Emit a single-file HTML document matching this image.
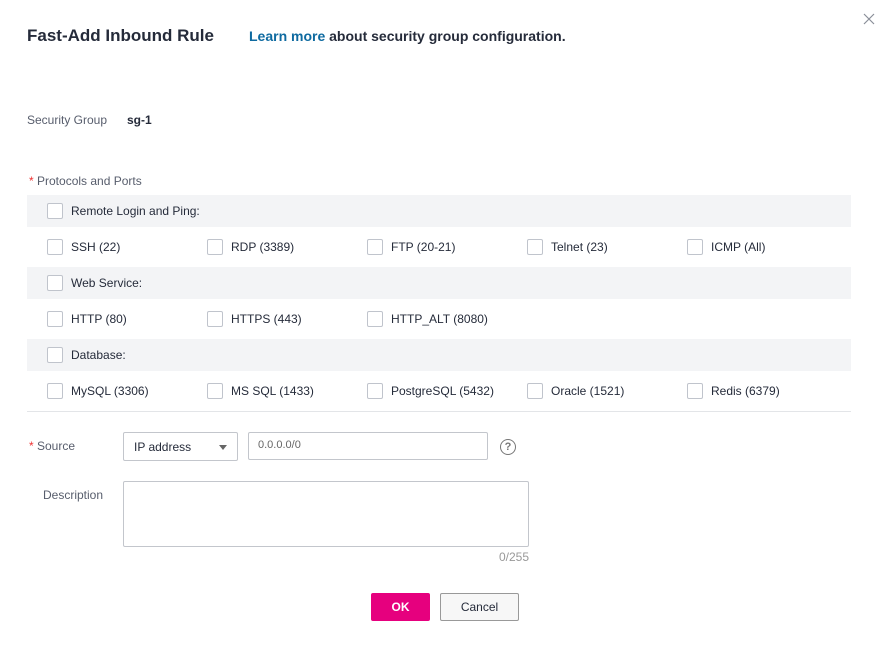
<!DOCTYPE html><html><head><meta charset="utf-8"><style>
body{margin:0;width:892px;height:650px;background:#fff;font-family:"Liberation Sans",sans-serif;font-size:12px;color:#252b3a;position:relative;overflow:hidden}
.a{position:absolute;white-space:nowrap}
.l{color:#575d6c}
.g{position:absolute;left:27px;width:824px;height:32px;background:#f3f4f6}
.cb{position:absolute;width:14px;height:14px;border:1px solid #c0c4cc;border-radius:2px;background:#fff}
.box{position:absolute;border:1px solid #c3c6cc;border-radius:2px;background:#fff;box-sizing:border-box}
</style></head><body>
<div class="a" style="left:27px;top:26px;font-size:17px;font-weight:bold;color:#252b3a">Fast-Add Inbound Rule</div>
<div class="a" style="left:249px;top:28px;font-size:14px;font-weight:bold"><span style="color:#0e6aa0">Learn more</span> about security group configuration.</div>
<svg class="a" style="left:863px;top:13px" width="12" height="12" viewBox="0 0 12 12"><path d="M1 1L11 11M11 1L1 11" stroke="#8a8e99" stroke-width="1.2" fill="none"/></svg>
<div class="a l" style="left:27px;top:113px">Security Group</div>
<div class="a" style="left:127px;top:113px;font-weight:bold">sg-1</div>
<div class="a l" style="left:29px;top:174px"><span style="color:#e33">*</span> Protocols and Ports</div>
<div class="g" style="top:195px"></div><div class="g" style="top:267px"></div><div class="g" style="top:339px"></div>
<div class="cb" style="left:47px;top:203px"></div><div class="a" style="left:71px;top:204px">Remote Login and Ping:</div>
<div class="cb" style="left:47px;top:275px"></div><div class="a" style="left:71px;top:276px">Web Service:</div>
<div class="cb" style="left:47px;top:347px"></div><div class="a" style="left:71px;top:348px">Database:</div>
<div class="cb" style="left:47px;top:239px"></div><div class="a" style="left:71px;top:240px">SSH (22)</div>
<div class="cb" style="left:207px;top:239px"></div><div class="a" style="left:231px;top:240px">RDP (3389)</div>
<div class="cb" style="left:367px;top:239px"></div><div class="a" style="left:391px;top:240px">FTP (20-21)</div>
<div class="cb" style="left:527px;top:239px"></div><div class="a" style="left:551px;top:240px">Telnet (23)</div>
<div class="cb" style="left:687px;top:239px"></div><div class="a" style="left:711px;top:240px">ICMP (All)</div>
<div class="cb" style="left:47px;top:311px"></div><div class="a" style="left:71px;top:312px">HTTP (80)</div>
<div class="cb" style="left:207px;top:311px"></div><div class="a" style="left:231px;top:312px">HTTPS (443)</div>
<div class="cb" style="left:367px;top:311px"></div><div class="a" style="left:391px;top:312px">HTTP_ALT (8080)</div>
<div class="cb" style="left:47px;top:383px"></div><div class="a" style="left:71px;top:384px">MySQL (3306)</div>
<div class="cb" style="left:207px;top:383px"></div><div class="a" style="left:231px;top:384px">MS SQL (1433)</div>
<div class="cb" style="left:367px;top:383px"></div><div class="a" style="left:391px;top:384px">PostgreSQL (5432)</div>
<div class="cb" style="left:527px;top:383px"></div><div class="a" style="left:551px;top:384px">Oracle (1521)</div>
<div class="cb" style="left:687px;top:383px"></div><div class="a" style="left:711px;top:384px">Redis (6379)</div>
<div class="a" style="left:27px;top:411px;width:824px;height:1px;background:#e3e5e8"></div>
<div class="a l" style="left:29px;top:439px"><span style="color:#e33">*</span> Source</div>
<div class="box" style="left:123px;top:432px;width:115px;height:29px"></div>
<div class="a" style="left:134px;top:440px">IP address</div>
<div class="a" style="left:219px;top:445px;width:0;height:0;border-left:4px solid transparent;border-right:4px solid transparent;border-top:5px solid #666"></div>
<div class="box" style="left:248px;top:432px;width:240px;height:28px"></div>
<div class="a" style="left:258px;top:439px;font-size:11px;color:#666">0.0.0.0/0</div>
<div class="a" style="left:500px;top:439px;width:14px;height:14px;border:1.5px solid #777;border-radius:50%;text-align:center;font-size:11px;line-height:14px;color:#777;font-weight:bold">?</div>
<div class="a l" style="left:43px;top:488px">Description</div>
<div class="box" style="left:123px;top:481px;width:406px;height:66px"></div>
<div class="a" style="left:499px;top:550px;color:#999">0/255</div>
<div class="a" style="left:371px;top:593px;width:59px;height:28px;background:#e6007e;border-radius:2px;color:#fff;font-weight:bold;text-align:center;line-height:28px">OK</div>
<div class="box" style="left:440px;top:593px;width:79px;height:28px;border-color:#999;background:#f7f7f7;text-align:center;line-height:26px">Cancel</div>
</body></html>
